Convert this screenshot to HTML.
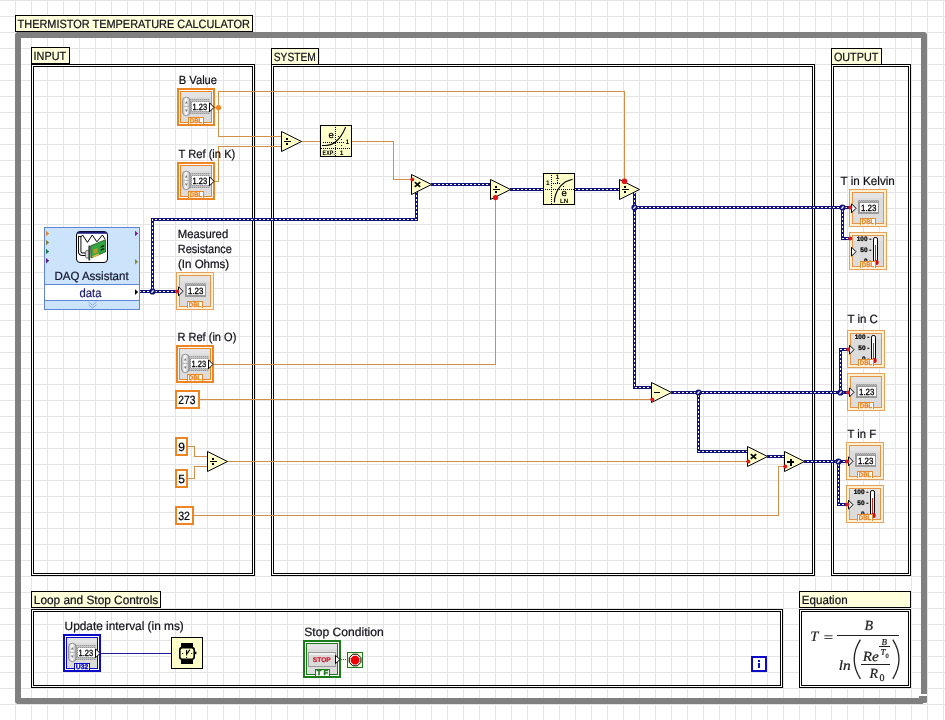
<!DOCTYPE html>
<html lang="en"><head><meta charset="utf-8"><title>Thermistor Temperature Calculator</title>
<style>html,body{margin:0;padding:0;background:#fff;overflow:hidden}svg{display:block;will-change:transform}</style>
</head><body>
<svg width="945" height="720" viewBox="0 0 945 720" shape-rendering="crispEdges" font-family="'Liberation Sans', sans-serif" text-rendering="geometricPrecision">
<defs>
<pattern id="grid" x="0" y="0" width="16" height="16" patternUnits="userSpaceOnUse"><rect x="0" y="0" width="16" height="1" fill="#e4e4e5"/><rect x="15" y="0" width="1" height="16" fill="#e4e4e5"/></pattern>
<linearGradient id="knob" x1="0" x2="1" y1="0" y2="0"><stop offset="0" stop-color="#bcbcbc"/><stop offset="0.45" stop-color="#ffffff"/><stop offset="1" stop-color="#b0b0b0"/></linearGradient>
<pattern id="tex" x="0" y="0" width="2" height="2" patternUnits="userSpaceOnUse"><rect x="0" y="0" width="1" height="1" fill="#bcbcbc"/><rect x="1" y="1" width="1" height="1" fill="#bcbcbc"/></pattern>
</defs>
<rect x="0" y="0" width="945" height="720" fill="#fff"/>
<rect x="0" y="0" width="945" height="720" fill="url(#grid)"/>
<path d="M17 32 H925 L927 34 V702 L925 704 H17 L15 702 V34 Z M21 38 V698 H921 V38 Z" fill="#808080" fill-rule="evenodd" shape-rendering="auto"/>
<rect x="921" y="694" width="6" height="2" fill="#fff"/>
<rect x="919" y="696" width="2" height="2" fill="#808080"/>
<rect x="923" y="703" width="3" height="1" fill="#fff"/>
<rect x="921" y="696" width="6" height="2" fill="#808080"/>
<rect x="15.5" y="15.5" width="237" height="16" fill="#ffffdc" stroke="#000"/>
<text x="17.6" y="28" font-size="12" fill="#101018" textLength="232.2" lengthAdjust="spacingAndGlyphs" stroke="#101018" stroke-width="0.22">THERMISTOR TEMPERATURE CALCULATOR</text>
<rect x="31.5" y="64.5" width="223" height="511" fill="none" stroke="#000"/>
<rect x="32.5" y="65.5" width="221" height="509" fill="none" stroke="#fff"/>
<rect x="33.5" y="66.5" width="219" height="507" fill="none" stroke="#000"/>
<rect x="271.5" y="64.5" width="543" height="511" fill="none" stroke="#000"/>
<rect x="272.5" y="65.5" width="541" height="509" fill="none" stroke="#fff"/>
<rect x="273.5" y="66.5" width="539" height="507" fill="none" stroke="#000"/>
<rect x="831.5" y="64.5" width="79" height="511" fill="none" stroke="#000"/>
<rect x="832.5" y="65.5" width="77" height="509" fill="none" stroke="#fff"/>
<rect x="833.5" y="66.5" width="75" height="507" fill="none" stroke="#000"/>
<rect x="31.5" y="609.5" width="751" height="78" fill="none" stroke="#000"/>
<rect x="32.5" y="610.5" width="749" height="76" fill="none" stroke="#fff"/>
<rect x="33.5" y="611.5" width="747" height="74" fill="none" stroke="#000"/>
<rect x="799" y="609" width="112" height="79" fill="#fff"/>
<rect x="799.5" y="609.5" width="111" height="78" fill="none" stroke="#000"/>
<rect x="800.5" y="610.5" width="109" height="76" fill="none" stroke="#fff"/>
<rect x="801.5" y="611.5" width="107" height="74" fill="none" stroke="#000"/>
<rect x="31.5" y="47.5" width="38" height="16" fill="#ffffdc" stroke="#000"/>
<text x="33.6" y="60" font-size="12" fill="#101018" textLength="32.6" lengthAdjust="spacingAndGlyphs" stroke="#101018" stroke-width="0.22">INPUT</text>
<rect x="271.5" y="48.5" width="47" height="16" fill="#ffffdc" stroke="#000"/>
<text x="273.8" y="61" font-size="12" fill="#101018" textLength="42" lengthAdjust="spacingAndGlyphs" stroke="#101018" stroke-width="0.22">SYSTEM</text>
<rect x="831.5" y="48.5" width="50" height="16" fill="#ffffdc" stroke="#000"/>
<text x="833.9" y="61" font-size="12" fill="#101018" textLength="44.5" lengthAdjust="spacingAndGlyphs" stroke="#101018" stroke-width="0.22">OUTPUT</text>
<rect x="31.5" y="591.5" width="129" height="16" fill="#ffffdc" stroke="#000"/>
<text x="33.8" y="604" font-size="12" fill="#101018" textLength="124.4" lengthAdjust="spacingAndGlyphs" stroke="#101018" stroke-width="0.22">Loop and Stop Controls</text>
<rect x="799.5" y="591.5" width="111" height="16" fill="#ffffdc" stroke="#000"/>
<text x="801.8" y="604" font-size="12" fill="#101018" textLength="45.8" lengthAdjust="spacingAndGlyphs" stroke="#101018" stroke-width="0.22">Equation</text>
<rect x="215" y="107" width="4" height="1" fill="#d18f47"/>
<rect x="218" y="91" width="1" height="46" fill="#d18f47"/>
<rect x="218" y="91" width="407" height="1" fill="#d18f47"/>
<rect x="624" y="91" width="1" height="90" fill="#d18f47"/>
<rect x="218" y="136" width="64" height="1" fill="#d18f47"/>
<rect x="215" y="181" width="4" height="1" fill="#d18f47"/>
<rect x="218" y="146" width="1" height="36" fill="#d18f47"/>
<rect x="218" y="146" width="64" height="1" fill="#d18f47"/>
<rect x="302" y="141" width="19" height="1" fill="#d18f47"/>
<rect x="352" y="141" width="42" height="1" fill="#d18f47"/>
<rect x="393" y="141" width="1" height="39" fill="#d18f47"/>
<rect x="393" y="179" width="19" height="1" fill="#d18f47"/>
<rect x="214" y="364" width="282" height="1" fill="#d18f47"/>
<rect x="495" y="198" width="1" height="167" fill="#d18f47"/>
<rect x="200" y="399" width="452" height="1" fill="#d18f47"/>
<rect x="188" y="446" width="7" height="1" fill="#d18f47"/>
<rect x="194" y="446" width="1" height="11" fill="#d18f47"/>
<rect x="194" y="456" width="14" height="1" fill="#d18f47"/>
<rect x="188" y="478" width="7" height="1" fill="#d18f47"/>
<rect x="194" y="466" width="1" height="13" fill="#d18f47"/>
<rect x="194" y="466" width="14" height="1" fill="#d18f47"/>
<rect x="228" y="461" width="520" height="1" fill="#d18f47"/>
<rect x="194" y="515" width="585" height="1" fill="#d18f47"/>
<rect x="778" y="466" width="1" height="50" fill="#d18f47"/>
<rect x="778" y="466" width="7" height="1" fill="#d18f47"/>
<circle cx="218.5" cy="107.5" r="2.6" fill="#ee8522" shape-rendering="auto"/>
<path d="M140.0 291.5 L177.0 291.5" fill="none" stroke="#12127c" stroke-width="3" stroke-linejoin="miter" stroke-linecap="butt"/>
<path d="M140.0 291.5 L177.0 291.5" fill="none" stroke="#fff" stroke-width="1" stroke-dasharray="2 2" stroke-dashoffset="1"/>
<path d="M152.5 292.0 L152.5 219.5 L416.5 219.5 L416.5 192.0" fill="none" stroke="#12127c" stroke-width="3" stroke-linejoin="miter" stroke-linecap="butt"/>
<path d="M152.5 292.0 L152.5 219.5 L416.5 219.5 L416.5 192.0" fill="none" stroke="#fff" stroke-width="1" stroke-dasharray="2 2" stroke-dashoffset="1"/>
<path d="M431.0 184.5 L491.0 184.5" fill="none" stroke="#12127c" stroke-width="3" stroke-linejoin="miter" stroke-linecap="butt"/>
<path d="M431.0 184.5 L491.0 184.5" fill="none" stroke="#fff" stroke-width="1" stroke-dasharray="2 2" stroke-dashoffset="1"/>
<path d="M510.0 189.5 L544.0 189.5" fill="none" stroke="#12127c" stroke-width="3" stroke-linejoin="miter" stroke-linecap="butt"/>
<path d="M510.0 189.5 L544.0 189.5" fill="none" stroke="#fff" stroke-width="1" stroke-dasharray="2 2" stroke-dashoffset="1"/>
<path d="M575.0 189.5 L620.0 189.5" fill="none" stroke="#12127c" stroke-width="3" stroke-linejoin="miter" stroke-linecap="butt"/>
<path d="M575.0 189.5 L620.0 189.5" fill="none" stroke="#fff" stroke-width="1" stroke-dasharray="2 2" stroke-dashoffset="1"/>
<path d="M634.5 193.0 L634.5 387.5 L652.0 387.5" fill="none" stroke="#12127c" stroke-width="3" stroke-linejoin="miter" stroke-linecap="butt"/>
<path d="M634.5 193.0 L634.5 387.5 L652.0 387.5" fill="none" stroke="#fff" stroke-width="1" stroke-dasharray="2 2" stroke-dashoffset="1"/>
<path d="M634.0 207.5 L850.0 207.5" fill="none" stroke="#12127c" stroke-width="3" stroke-linejoin="miter" stroke-linecap="butt"/>
<path d="M634.0 207.5 L850.0 207.5" fill="none" stroke="#fff" stroke-width="1" stroke-dasharray="2 2" stroke-dashoffset="1"/>
<path d="M842.5 207.0 L842.5 238.5 L850.0 238.5" fill="none" stroke="#12127c" stroke-width="3" stroke-linejoin="miter" stroke-linecap="butt"/>
<path d="M842.5 207.0 L842.5 238.5 L850.0 238.5" fill="none" stroke="#fff" stroke-width="1" stroke-dasharray="2 2" stroke-dashoffset="1"/>
<path d="M671.0 392.5 L848.0 392.5" fill="none" stroke="#12127c" stroke-width="3" stroke-linejoin="miter" stroke-linecap="butt"/>
<path d="M671.0 392.5 L848.0 392.5" fill="none" stroke="#fff" stroke-width="1" stroke-dasharray="2 2" stroke-dashoffset="1"/>
<path d="M840.5 393.0 L840.5 349.5 L848.0 349.5" fill="none" stroke="#12127c" stroke-width="3" stroke-linejoin="miter" stroke-linecap="butt"/>
<path d="M840.5 393.0 L840.5 349.5 L848.0 349.5" fill="none" stroke="#fff" stroke-width="1" stroke-dasharray="2 2" stroke-dashoffset="1"/>
<path d="M698.5 392.0 L698.5 451.5 L748.0 451.5" fill="none" stroke="#12127c" stroke-width="3" stroke-linejoin="miter" stroke-linecap="butt"/>
<path d="M698.5 392.0 L698.5 451.5 L748.0 451.5" fill="none" stroke="#fff" stroke-width="1" stroke-dasharray="2 2" stroke-dashoffset="1"/>
<path d="M767.0 456.5 L785.0 456.5" fill="none" stroke="#12127c" stroke-width="3" stroke-linejoin="miter" stroke-linecap="butt"/>
<path d="M767.0 456.5 L785.0 456.5" fill="none" stroke="#fff" stroke-width="1" stroke-dasharray="2 2" stroke-dashoffset="1"/>
<path d="M804.0 461.5 L847.0 461.5" fill="none" stroke="#12127c" stroke-width="3" stroke-linejoin="miter" stroke-linecap="butt"/>
<path d="M804.0 461.5 L847.0 461.5" fill="none" stroke="#fff" stroke-width="1" stroke-dasharray="2 2" stroke-dashoffset="1"/>
<path d="M838.5 461.0 L838.5 504.5 L847.0 504.5" fill="none" stroke="#12127c" stroke-width="3" stroke-linejoin="miter" stroke-linecap="butt"/>
<path d="M838.5 461.0 L838.5 504.5 L847.0 504.5" fill="none" stroke="#fff" stroke-width="1" stroke-dasharray="2 2" stroke-dashoffset="1"/>
<circle cx="152.5" cy="291.5" r="3.1" fill="#12127c" shape-rendering="auto"/>
<path d="M151.8 292.2 L153.2 290.8" stroke="#fff" stroke-width="1.3" stroke-linecap="round" shape-rendering="auto"/>
<circle cx="634.5" cy="207.5" r="3.1" fill="#12127c" shape-rendering="auto"/>
<path d="M633.8 208.2 L635.2 206.8" stroke="#fff" stroke-width="1.3" stroke-linecap="round" shape-rendering="auto"/>
<circle cx="842.5" cy="207.5" r="3.1" fill="#12127c" shape-rendering="auto"/>
<path d="M841.8 208.2 L843.2 206.8" stroke="#fff" stroke-width="1.3" stroke-linecap="round" shape-rendering="auto"/>
<circle cx="698.5" cy="392.5" r="3.1" fill="#12127c" shape-rendering="auto"/>
<path d="M697.8 393.2 L699.2 391.8" stroke="#fff" stroke-width="1.3" stroke-linecap="round" shape-rendering="auto"/>
<circle cx="840.5" cy="392.5" r="3.1" fill="#12127c" shape-rendering="auto"/>
<path d="M839.8 393.2 L841.2 391.8" stroke="#fff" stroke-width="1.3" stroke-linecap="round" shape-rendering="auto"/>
<circle cx="838.5" cy="461.5" r="3.1" fill="#12127c" shape-rendering="auto"/>
<path d="M837.8 462.2 L839.2 460.8" stroke="#fff" stroke-width="1.3" stroke-linecap="round" shape-rendering="auto"/>
<text x="178.8" y="84" font-size="12" fill="#101018" textLength="38.2" lengthAdjust="spacingAndGlyphs" stroke="#101018" stroke-width="0.22">B Value</text>
<rect x="177" y="88" width="38" height="38" fill="#ee8522"/>
<rect x="179" y="90" width="34" height="34" fill="#fff"/>
<rect x="180" y="91" width="32" height="32" fill="#ee8522"/>
<rect x="181" y="92" width="30" height="30" fill="#dcdcdc"/>
<rect x="181" y="92" width="30" height="5" fill="#e4e4e4"/>
<rect x="189" y="99" width="21" height="15" fill="#989898"/>
<rect x="189" y="99" width="21" height="15" fill="url(#tex)"/>
<rect x="189" y="100" width="21" height="1" fill="#c8c8c8"/>
<rect x="189" y="112" width="21" height="1" fill="#c0c0c0"/>
<rect x="182.6" y="97.2" width="7.4" height="18.4" rx="3.6" fill="url(#knob)" stroke="#8a8a8a" stroke-width="0.9" shape-rendering="auto"/>
<path d="M184.9 103.4 l1.4 -2.4 l1.4 2.4z M184.9 109.6 l1.4 2.4 l1.4 -2.4z" fill="#7c7c7c" shape-rendering="auto"/>
<path d="M183.6 106.4 h5.4" stroke="#a8a8a8" stroke-width="0.8" shape-rendering="auto"/>
<rect x="192" y="102" width="18" height="9" fill="#fff"/>
<text x="192.6" y="109.6" font-size="9" fill="#000" textLength="14.6" lengthAdjust="spacingAndGlyphs" stroke="#000" stroke-width="0.3">1.23</text>
<path d="M209.5 102.8 L214 107.3 L209.5 111.8z" fill="#fff" stroke="#000" shape-rendering="auto"/>
<rect x="188" y="117" width="16" height="7" fill="#ee8522"/>
<rect x="189" y="118" width="14" height="6" fill="#fff"/>
<text x="196.0" y="123.3" font-size="6.8" fill="#ee8522" textLength="12.4" lengthAdjust="spacingAndGlyphs" font-weight="bold" text-anchor="middle" stroke="#ee8522" stroke-width="0.38">DBL</text>
<text x="178.5" y="158" font-size="12" fill="#101018" textLength="56.8" lengthAdjust="spacingAndGlyphs" stroke="#101018" stroke-width="0.22">T Ref (in K)</text>
<rect x="177" y="162" width="38" height="38" fill="#ee8522"/>
<rect x="179" y="164" width="34" height="34" fill="#fff"/>
<rect x="180" y="165" width="32" height="32" fill="#ee8522"/>
<rect x="181" y="166" width="30" height="30" fill="#dcdcdc"/>
<rect x="181" y="166" width="30" height="5" fill="#e4e4e4"/>
<rect x="189" y="173" width="21" height="15" fill="#989898"/>
<rect x="189" y="173" width="21" height="15" fill="url(#tex)"/>
<rect x="189" y="174" width="21" height="1" fill="#c8c8c8"/>
<rect x="189" y="186" width="21" height="1" fill="#c0c0c0"/>
<rect x="182.6" y="171.2" width="7.4" height="18.4" rx="3.6" fill="url(#knob)" stroke="#8a8a8a" stroke-width="0.9" shape-rendering="auto"/>
<path d="M184.9 177.4 l1.4 -2.4 l1.4 2.4z M184.9 183.6 l1.4 2.4 l1.4 -2.4z" fill="#7c7c7c" shape-rendering="auto"/>
<path d="M183.6 180.4 h5.4" stroke="#a8a8a8" stroke-width="0.8" shape-rendering="auto"/>
<rect x="192" y="176" width="18" height="9" fill="#fff"/>
<text x="192.6" y="183.6" font-size="9" fill="#000" textLength="14.6" lengthAdjust="spacingAndGlyphs" stroke="#000" stroke-width="0.3">1.23</text>
<path d="M209.5 176.8 L214 181.3 L209.5 185.8z" fill="#fff" stroke="#000" shape-rendering="auto"/>
<rect x="188" y="191" width="16" height="7" fill="#ee8522"/>
<rect x="189" y="192" width="14" height="6" fill="#fff"/>
<text x="196.0" y="197.3" font-size="6.8" fill="#ee8522" textLength="12.4" lengthAdjust="spacingAndGlyphs" font-weight="bold" text-anchor="middle" stroke="#ee8522" stroke-width="0.38">DBL</text>
<text x="177.8" y="238.3" font-size="12" fill="#101018" textLength="50.4" lengthAdjust="spacingAndGlyphs" stroke="#101018" stroke-width="0.22">Measured</text>
<text x="177.8" y="253.2" font-size="12" fill="#101018" textLength="54.0" lengthAdjust="spacingAndGlyphs" stroke="#101018" stroke-width="0.22">Resistance</text>
<text x="178.0" y="268.2" font-size="12" fill="#101018" textLength="51.2" lengthAdjust="spacingAndGlyphs" stroke="#101018" stroke-width="0.22">(In Ohms)</text>
<rect x="176" y="272" width="38" height="38" fill="#e6a05a"/>
<rect x="177" y="273" width="36" height="36" fill="#fff1d2"/>
<rect x="179" y="275" width="32" height="32" fill="#e8954a"/>
<rect x="180" y="276" width="30" height="30" fill="#dcdcdc"/>
<rect x="180" y="276" width="30" height="5" fill="#e4e4e4"/>
<rect x="185" y="283" width="21" height="14" fill="#9a9a9a"/>
<rect x="185" y="283" width="21" height="2" fill="url(#tex)"/>
<rect x="187" y="286" width="18" height="9" fill="#fff"/>
<text x="188" y="293.6" font-size="9" fill="#000" textLength="15.4" lengthAdjust="spacingAndGlyphs" stroke="#000" stroke-width="0.3">1.23</text>
<path d="M178.5 286.8 L183 291.3 L178.5 295.8z" fill="#fff" stroke="#000" shape-rendering="auto"/>
<rect x="187" y="301" width="16" height="7" fill="#e58a2c"/>
<rect x="188" y="302" width="14" height="6" fill="#fff"/>
<text x="195.0" y="307.3" font-size="6.8" fill="#e58a2c" textLength="12.4" lengthAdjust="spacingAndGlyphs" font-weight="bold" text-anchor="middle" stroke="#e58a2c" stroke-width="0.38">DBL</text>
<text x="177.4" y="340.6" font-size="12" fill="#101018" textLength="59" lengthAdjust="spacingAndGlyphs" stroke="#101018" stroke-width="0.22">R Ref (in O)</text>
<rect x="176" y="345" width="38" height="38" fill="#ee8522"/>
<rect x="178" y="347" width="34" height="34" fill="#fff"/>
<rect x="179" y="348" width="32" height="32" fill="#ee8522"/>
<rect x="180" y="349" width="30" height="30" fill="#dcdcdc"/>
<rect x="180" y="349" width="30" height="5" fill="#e4e4e4"/>
<rect x="188" y="356" width="21" height="15" fill="#989898"/>
<rect x="188" y="356" width="21" height="15" fill="url(#tex)"/>
<rect x="188" y="357" width="21" height="1" fill="#c8c8c8"/>
<rect x="188" y="369" width="21" height="1" fill="#c0c0c0"/>
<rect x="181.6" y="354.2" width="7.4" height="18.4" rx="3.6" fill="url(#knob)" stroke="#8a8a8a" stroke-width="0.9" shape-rendering="auto"/>
<path d="M183.9 360.4 l1.4 -2.4 l1.4 2.4z M183.9 366.6 l1.4 2.4 l1.4 -2.4z" fill="#7c7c7c" shape-rendering="auto"/>
<path d="M182.6 363.4 h5.4" stroke="#a8a8a8" stroke-width="0.8" shape-rendering="auto"/>
<rect x="191" y="359" width="18" height="9" fill="#fff"/>
<text x="191.6" y="366.6" font-size="9" fill="#000" textLength="14.6" lengthAdjust="spacingAndGlyphs" stroke="#000" stroke-width="0.3">1.23</text>
<path d="M208.5 359.8 L213 364.3 L208.5 368.8z" fill="#fff" stroke="#000" shape-rendering="auto"/>
<rect x="187" y="374" width="16" height="7" fill="#ee8522"/>
<rect x="188" y="375" width="14" height="6" fill="#fff"/>
<text x="195.0" y="380.3" font-size="6.8" fill="#ee8522" textLength="12.4" lengthAdjust="spacingAndGlyphs" font-weight="bold" text-anchor="middle" stroke="#ee8522" stroke-width="0.38">DBL</text>
<rect x="175" y="390" width="25" height="19" fill="#ee8522"/>
<rect x="177" y="392" width="21" height="15" fill="#fff"/>
<text x="178.3" y="403.5" font-size="12" fill="#000" textLength="17.2" lengthAdjust="spacingAndGlyphs" stroke="#000" stroke-width="0.22">273</text>
<rect x="175" y="437" width="13" height="19" fill="#ee8522"/>
<rect x="177" y="439" width="9" height="15" fill="#fff"/>
<text x="178.2" y="450.5" font-size="12" fill="#000" stroke="#000" stroke-width="0.22">9</text>
<rect x="175" y="469" width="13" height="19" fill="#ee8522"/>
<rect x="177" y="471" width="9" height="15" fill="#fff"/>
<text x="178.2" y="482.5" font-size="12" fill="#000" stroke="#000" stroke-width="0.22">5</text>
<rect x="175" y="506" width="19" height="19" fill="#ee8522"/>
<rect x="177" y="508" width="15" height="15" fill="#fff"/>
<text x="178.2" y="519.5" font-size="12" fill="#000" textLength="11.8" lengthAdjust="spacingAndGlyphs" stroke="#000" stroke-width="0.22">32</text>
<path d="M207.5 451.5 L207.5 471.5 L227.5 461.5z" fill="#ffffca" stroke="#000" stroke-linejoin="miter" shape-rendering="auto"/>
<rect x="210" y="461" width="7" height="1" fill="#000"/>
<rect x="212" y="458" width="2" height="2" fill="#000"/>
<rect x="212" y="463" width="2" height="2" fill="#000"/>
<rect x="44" y="227" width="96" height="83" fill="#5f84d8"/>
<rect x="45" y="228" width="94" height="81" fill="#cbe4fc"/>
<rect x="45" y="285" width="94" height="15" fill="#fff"/>
<rect x="45" y="284" width="94" height="1" fill="#5f84d8"/>
<rect x="45" y="300" width="94" height="1" fill="#5f84d8"/>
<text x="54.4" y="280" font-size="12" fill="#14142a" textLength="74.2" lengthAdjust="spacingAndGlyphs" stroke="#14142a" stroke-width="0.22">DAQ Assistant</text>
<text x="79.6" y="296.8" font-size="12" fill="#1a1a70" textLength="21.8" lengthAdjust="spacingAndGlyphs" stroke="#1a1a70" stroke-width="0.22">data</text>
<path d="M88.5 302 l4 3.2 l4 -3.2 M88.5 304.8 l4 3.2 l4 -3.2" fill="none" stroke="#8aa6de" stroke-width="1" shape-rendering="auto"/>
<path d="M46 230.7 l3.2 2.8 l-3.2 2.8z" fill="#dc8a30" shape-rendering="auto"/>
<path d="M46 239.7 l3.2 2.8 l-3.2 2.8z" fill="#848430" shape-rendering="auto"/>
<path d="M46 248.7 l3.2 2.8 l-3.2 2.8z" fill="#1e8040" shape-rendering="auto"/>
<path d="M46 258.0 l3.2 2.8 l-3.2 2.8z" fill="#601c88" shape-rendering="auto"/>
<path d="M135 230.7 l3.2 2.8 l-3.2 2.8z" fill="#80208a" shape-rendering="auto"/>
<path d="M135 259.0 l3.2 2.8 l-3.2 2.8z" fill="#8c8c40" shape-rendering="auto"/>
<path d="M135 289.3 l3.2 2.8 l-3.2 2.8z" fill="#000" shape-rendering="auto"/>
<g shape-rendering="auto">
<rect x="76.5" y="231.5" width="31" height="31" rx="3.5" fill="#fff" stroke="#000"/>
<path d="M79.2 231.4 h25.6 a3.2 3.2 0 0 1 2.6 2.4 h-30.8 a3.2 3.2 0 0 1 2.6 -2.4z" fill="#1c1c78"/>
<path d="M78.3 236.4 H81.6 L82.6 235 L87.4 242.4 L92.3 235 L96.9 241.8 L102.4 235 L105.2 239.2" fill="none" stroke="#000" stroke-width="1"/>
<path d="M79.7 236.4 V251.6 Q79.7 254.2 82.6 254.2 H86" fill="none" stroke="#000" stroke-width="3.4"/>
<path d="M79.7 237 V251.6 Q79.7 254.2 82.6 254.2 H86" fill="none" stroke="#fff" stroke-width="1.5"/>
<path d="M90.6 245.8 L105.5 239.7 L105.5 251.9 L91 258z" fill="#34a440" stroke="#1d5a22" stroke-width="0.8"/>
<path d="M93.2 249.6 L97.5 247.9 L97.6 252.6 L93.3 254.3z" fill="#b89a28"/>
<path d="M100.6 246.2 l3.6 -1.5 l0 1.8 l-3.6 1.5z M100.6 249.2 l3.6 -1.5 l0 1.8 l-3.6 1.5z" fill="#16301a"/>
<path d="M92.4 256.0 l6.4 -2.7 l0.1 1.9 l-6.4 2.7z" fill="#d8b838"/>
<path d="M85.4 252 q0 -1.6 2.6 -1.8 h1.2 v8 h-1.2 q-2.6 -0.2 -2.6 -1.8z" fill="#d8d8d8" stroke="#444" stroke-width="0.7"/>
<path d="M89.3 245.6 V260.4" stroke="#3c3c3c" stroke-width="1.8"/>
</g>
<path d="M281.5 131.5 L281.5 151.5 L301.5 141.5z" fill="#ffffca" stroke="#000" stroke-linejoin="miter" shape-rendering="auto"/>
<rect x="284" y="141" width="7" height="1" fill="#000"/>
<rect x="286" y="138" width="2" height="2" fill="#000"/>
<rect x="286" y="143" width="2" height="2" fill="#000"/>
<path d="M411.5 174.5 L411.5 194.5 L431.5 184.5z" fill="#ffffca" stroke="#000" stroke-linejoin="miter" shape-rendering="auto"/>
<path d="M414.8 182.2 L420.2 186.8 M420.2 182.2 L414.8 186.8" stroke="#000" stroke-width="1.7" shape-rendering="auto"/>
<path d="M490.5 179.5 L490.5 199.5 L510.5 189.5z" fill="#ffffca" stroke="#000" stroke-linejoin="miter" shape-rendering="auto"/>
<rect x="493" y="189" width="7" height="1" fill="#000"/>
<rect x="495" y="186" width="2" height="2" fill="#000"/>
<rect x="495" y="191" width="2" height="2" fill="#000"/>
<path d="M619.5 179.5 L619.5 199.5 L639.5 189.5z" fill="#ffffca" stroke="#000" stroke-linejoin="miter" shape-rendering="auto"/>
<rect x="622" y="189" width="7" height="1" fill="#000"/>
<rect x="624" y="186" width="2" height="2" fill="#000"/>
<rect x="624" y="191" width="2" height="2" fill="#000"/>
<path d="M651.5 382.5 L651.5 402.5 L671.5 392.5z" fill="#ffffca" stroke="#000" stroke-linejoin="miter" shape-rendering="auto"/>
<rect x="654" y="392" width="6" height="1" fill="#000"/>
<path d="M747.5 446.5 L747.5 466.5 L767.5 456.5z" fill="#ffffca" stroke="#000" stroke-linejoin="miter" shape-rendering="auto"/>
<path d="M750.8 454.2 L756.2 458.8 M756.2 454.2 L750.8 458.8" stroke="#000" stroke-width="1.7" shape-rendering="auto"/>
<path d="M784.5 451.5 L784.5 471.5 L804.5 461.5z" fill="#ffffca" stroke="#000" stroke-linejoin="miter" shape-rendering="auto"/>
<rect x="787" y="461" width="7" height="2" fill="#000"/>
<rect x="789.5" y="458.5" width="2" height="7" fill="#000"/>
<circle cx="412.3" cy="179.5" r="2.0" fill="#e01818" shape-rendering="auto"/>
<circle cx="495.5" cy="197.6" r="2.7" fill="#e01818" shape-rendering="auto"/>
<circle cx="624.5" cy="181.3" r="2.8" fill="#e01818" shape-rendering="auto"/>
<circle cx="652.3" cy="399.5" r="2.0" fill="#e01818" shape-rendering="auto"/>
<circle cx="748.3" cy="461.5" r="2.0" fill="#e01818" shape-rendering="auto"/>
<circle cx="785.3" cy="466.5" r="2.0" fill="#e01818" shape-rendering="auto"/>
<rect x="320.5" y="125.5" width="31" height="31" fill="#ffffca" stroke="#000"/>
<rect x="335" y="127" width="1" height="1" fill="#000"/>
<rect x="335" y="129" width="1" height="1" fill="#000"/>
<rect x="335" y="131" width="1" height="1" fill="#000"/>
<rect x="335" y="133" width="1" height="1" fill="#000"/>
<rect x="335" y="135" width="1" height="1" fill="#000"/>
<rect x="335" y="137" width="1" height="1" fill="#000"/>
<rect x="335" y="139" width="1" height="1" fill="#000"/>
<rect x="335" y="141" width="1" height="1" fill="#000"/>
<rect x="335" y="143" width="1" height="1" fill="#000"/>
<rect x="335" y="145" width="1" height="1" fill="#000"/>
<rect x="335" y="147" width="1" height="1" fill="#000"/>
<rect x="335" y="149" width="1" height="1" fill="#000"/>
<rect x="335" y="151" width="1" height="1" fill="#000"/>
<rect x="335" y="153" width="1" height="1" fill="#000"/>
<rect x="335" y="155" width="1" height="1" fill="#000"/>
<rect x="323" y="142" width="1" height="1" fill="#000"/>
<rect x="325" y="142" width="1" height="1" fill="#000"/>
<rect x="327" y="142" width="1" height="1" fill="#000"/>
<rect x="329" y="142" width="1" height="1" fill="#000"/>
<rect x="331" y="142" width="1" height="1" fill="#000"/>
<rect x="333" y="142" width="1" height="1" fill="#000"/>
<rect x="335" y="142" width="1" height="1" fill="#000"/>
<rect x="337" y="142" width="1" height="1" fill="#000"/>
<rect x="339" y="142" width="1" height="1" fill="#000"/>
<rect x="341" y="142" width="1" height="1" fill="#000"/>
<rect x="343" y="142" width="1" height="1" fill="#000"/>
<rect x="321" y="148" width="1" height="1" fill="#000"/>
<rect x="323" y="148" width="1" height="1" fill="#000"/>
<rect x="325" y="148" width="1" height="1" fill="#000"/>
<rect x="327" y="148" width="1" height="1" fill="#000"/>
<rect x="329" y="148" width="1" height="1" fill="#000"/>
<rect x="331" y="148" width="1" height="1" fill="#000"/>
<rect x="333" y="148" width="1" height="1" fill="#000"/>
<rect x="335" y="148" width="1" height="1" fill="#000"/>
<rect x="337" y="148" width="1" height="1" fill="#000"/>
<rect x="339" y="148" width="1" height="1" fill="#000"/>
<rect x="341" y="148" width="1" height="1" fill="#000"/>
<rect x="343" y="148" width="1" height="1" fill="#000"/>
<rect x="345" y="148" width="1" height="1" fill="#000"/>
<rect x="347" y="148" width="1" height="1" fill="#000"/>
<rect x="349" y="148" width="1" height="1" fill="#000"/>
<rect x="338" y="136" width="1" height="1" fill="#000"/>
<rect x="341" y="139" width="1" height="1" fill="#000"/>
<rect x="341" y="145" width="1" height="1" fill="#000"/>
<path d="M322 145.5 h3.5 q6.5 -0.4 10.5 -4 q6 -5.2 9.6 -14.4" fill="none" stroke="#000" stroke-width="1.15" shape-rendering="auto"/>
<text x="328.6" y="138.4" font-size="9.5" fill="#000" stroke="#000" stroke-width="0.2">e</text>
<text x="345.6" y="144.2" font-size="6.5" fill="#000" font-weight="bold">1</text>
<text x="322.6" y="154.8" font-size="6.6" fill="#000" textLength="12.4" lengthAdjust="spacingAndGlyphs" font-weight="bold">EXP:</text>
<text x="339.8" y="154.8" font-size="6.6" fill="#000" font-weight="bold">1</text>
<rect x="543.5" y="173.5" width="31" height="31" fill="#ffffca" stroke="#000"/>
<rect x="551" y="175" width="1" height="1" fill="#000"/>
<rect x="551" y="177" width="1" height="1" fill="#000"/>
<rect x="551" y="179" width="1" height="1" fill="#000"/>
<rect x="551" y="181" width="1" height="1" fill="#000"/>
<rect x="551" y="183" width="1" height="1" fill="#000"/>
<rect x="551" y="185" width="1" height="1" fill="#000"/>
<rect x="551" y="187" width="1" height="1" fill="#000"/>
<rect x="551" y="189" width="1" height="1" fill="#000"/>
<rect x="551" y="191" width="1" height="1" fill="#000"/>
<rect x="551" y="193" width="1" height="1" fill="#000"/>
<rect x="551" y="195" width="1" height="1" fill="#000"/>
<rect x="551" y="197" width="1" height="1" fill="#000"/>
<rect x="551" y="199" width="1" height="1" fill="#000"/>
<rect x="551" y="201" width="1" height="1" fill="#000"/>
<rect x="551" y="203" width="1" height="1" fill="#000"/>
<rect x="545" y="189" width="1" height="1" fill="#000"/>
<rect x="547" y="189" width="1" height="1" fill="#000"/>
<rect x="549" y="189" width="1" height="1" fill="#000"/>
<rect x="551" y="189" width="1" height="1" fill="#000"/>
<rect x="553" y="189" width="1" height="1" fill="#000"/>
<rect x="555" y="189" width="1" height="1" fill="#000"/>
<rect x="557" y="189" width="1" height="1" fill="#000"/>
<rect x="559" y="189" width="1" height="1" fill="#000"/>
<rect x="561" y="189" width="1" height="1" fill="#000"/>
<rect x="563" y="189" width="1" height="1" fill="#000"/>
<rect x="565" y="189" width="1" height="1" fill="#000"/>
<rect x="567" y="189" width="1" height="1" fill="#000"/>
<rect x="569" y="189" width="1" height="1" fill="#000"/>
<rect x="571" y="189" width="1" height="1" fill="#000"/>
<rect x="573" y="189" width="1" height="1" fill="#000"/>
<rect x="553" y="183" width="1" height="1" fill="#000"/>
<rect x="555" y="183" width="1" height="1" fill="#000"/>
<rect x="557" y="183" width="1" height="1" fill="#000"/>
<rect x="559" y="183" width="1" height="1" fill="#000"/>
<rect x="557" y="180" width="1" height="1" fill="#000"/>
<rect x="557" y="182" width="1" height="1" fill="#000"/>
<rect x="563" y="186" width="1" height="1" fill="#000"/>
<path d="M554.5 202.6 V199.4 Q555.2 194.8 557.6 190 Q560.6 185 565.6 181.8 Q568.6 180.2 572.6 179.2" fill="none" stroke="#000" stroke-width="1.15" shape-rendering="auto"/>
<text x="546.0" y="184.6" font-size="6.5" fill="#000" font-weight="bold">1</text>
<text x="555.8" y="178.6" font-size="6.5" fill="#000" font-weight="bold">1</text>
<text x="561.4" y="195.8" font-size="9.5" fill="#000" stroke="#000" stroke-width="0.2">e</text>
<text x="560.0" y="202.6" font-size="6.2" fill="#000" textLength="8.2" lengthAdjust="spacingAndGlyphs" font-weight="bold">LN</text>
<text x="840.6" y="184.8" font-size="12" fill="#101018" textLength="54.2" lengthAdjust="spacingAndGlyphs" stroke="#101018" stroke-width="0.22">T in Kelvin</text>
<rect x="849" y="189" width="38" height="38" fill="#e6a05a"/>
<rect x="850" y="190" width="36" height="36" fill="#fff1d2"/>
<rect x="852" y="192" width="32" height="32" fill="#e8954a"/>
<rect x="853" y="193" width="30" height="30" fill="#dcdcdc"/>
<rect x="853" y="193" width="30" height="5" fill="#e4e4e4"/>
<rect x="858" y="200" width="21" height="14" fill="#9a9a9a"/>
<rect x="858" y="200" width="21" height="2" fill="url(#tex)"/>
<rect x="860" y="203" width="18" height="9" fill="#fff"/>
<text x="861" y="210.6" font-size="9" fill="#000" textLength="15.4" lengthAdjust="spacingAndGlyphs" stroke="#000" stroke-width="0.3">1.23</text>
<path d="M851.5 203.8 L856 208.3 L851.5 212.8z" fill="#fff" stroke="#000" shape-rendering="auto"/>
<rect x="860" y="218" width="16" height="7" fill="#e58a2c"/>
<rect x="861" y="219" width="14" height="6" fill="#fff"/>
<text x="868.0" y="224.3" font-size="6.8" fill="#e58a2c" textLength="12.4" lengthAdjust="spacingAndGlyphs" font-weight="bold" text-anchor="middle" stroke="#e58a2c" stroke-width="0.38">DBL</text>
<rect x="849" y="232" width="38" height="38" fill="#e6a05a"/>
<rect x="850" y="233" width="36" height="36" fill="#fff1d2"/>
<rect x="852" y="235" width="32" height="32" fill="#e8954a"/>
<rect x="853" y="236" width="30" height="30" fill="#dcdcdc"/>
<rect x="853" y="236" width="30" height="5" fill="#e4e4e4"/>
<text x="871.5" y="241.3" font-size="6.5" fill="#000" font-weight="bold" text-anchor="end" stroke="#000" stroke-width="0.22">100 -</text>
<text x="871.5" y="252.3" font-size="6.5" fill="#000" font-weight="bold" text-anchor="end" stroke="#000" stroke-width="0.22">50 -</text>
<text x="871.5" y="263.0" font-size="6.5" fill="#000" font-weight="bold" text-anchor="end" stroke="#000" stroke-width="0.22">0 -</text>
<rect x="873.5" y="237.5" width="4" height="26" rx="1.6" fill="#fff" stroke="#000" shape-rendering="auto"/>
<rect x="875" y="245" width="1" height="18" fill="#d02020"/>
<circle cx="876.2" cy="262.6" r="2.5" fill="#d01010" shape-rendering="auto"/>
<path d="M851.5 247.2 L856 251.7 L851.5 256.2z" fill="#fff" stroke="#000" shape-rendering="auto"/>
<rect x="860" y="261" width="16" height="7" fill="#e58a2c"/>
<rect x="861" y="262" width="14" height="6" fill="#fff"/>
<text x="868.0" y="267.3" font-size="6.8" fill="#e58a2c" textLength="12.4" lengthAdjust="spacingAndGlyphs" font-weight="bold" text-anchor="middle" stroke="#e58a2c" stroke-width="0.38">DBL</text>
<text x="847.5" y="323" font-size="12" fill="#101018" textLength="30.4" lengthAdjust="spacingAndGlyphs" stroke="#101018" stroke-width="0.22">T in C</text>
<rect x="847" y="330" width="38" height="38" fill="#e6a05a"/>
<rect x="848" y="331" width="36" height="36" fill="#fff1d2"/>
<rect x="850" y="333" width="32" height="32" fill="#e8954a"/>
<rect x="851" y="334" width="30" height="30" fill="#dcdcdc"/>
<rect x="851" y="334" width="30" height="5" fill="#e4e4e4"/>
<text x="869.5" y="339.3" font-size="6.5" fill="#000" font-weight="bold" text-anchor="end" stroke="#000" stroke-width="0.22">100 -</text>
<text x="869.5" y="350.3" font-size="6.5" fill="#000" font-weight="bold" text-anchor="end" stroke="#000" stroke-width="0.22">50 -</text>
<text x="869.5" y="361.0" font-size="6.5" fill="#000" font-weight="bold" text-anchor="end" stroke="#000" stroke-width="0.22">0 -</text>
<rect x="871.5" y="335.5" width="4" height="26" rx="1.6" fill="#fff" stroke="#000" shape-rendering="auto"/>
<rect x="873" y="343" width="1" height="18" fill="#d02020"/>
<circle cx="874.2" cy="360.6" r="2.5" fill="#d01010" shape-rendering="auto"/>
<path d="M849.5 345.2 L854 349.7 L849.5 354.2z" fill="#fff" stroke="#000" shape-rendering="auto"/>
<rect x="858" y="359" width="16" height="7" fill="#e58a2c"/>
<rect x="859" y="360" width="14" height="6" fill="#fff"/>
<text x="866.0" y="365.3" font-size="6.8" fill="#e58a2c" textLength="12.4" lengthAdjust="spacingAndGlyphs" font-weight="bold" text-anchor="middle" stroke="#e58a2c" stroke-width="0.38">DBL</text>
<rect x="847" y="373" width="38" height="38" fill="#e6a05a"/>
<rect x="848" y="374" width="36" height="36" fill="#fff1d2"/>
<rect x="850" y="376" width="32" height="32" fill="#e8954a"/>
<rect x="851" y="377" width="30" height="30" fill="#dcdcdc"/>
<rect x="851" y="377" width="30" height="5" fill="#e4e4e4"/>
<rect x="856" y="384" width="21" height="14" fill="#9a9a9a"/>
<rect x="856" y="384" width="21" height="2" fill="url(#tex)"/>
<rect x="858" y="387" width="18" height="9" fill="#fff"/>
<text x="859" y="394.6" font-size="9" fill="#000" textLength="15.4" lengthAdjust="spacingAndGlyphs" stroke="#000" stroke-width="0.3">1.23</text>
<path d="M849.5 387.8 L854 392.3 L849.5 396.8z" fill="#fff" stroke="#000" shape-rendering="auto"/>
<rect x="858" y="402" width="16" height="7" fill="#e58a2c"/>
<rect x="859" y="403" width="14" height="6" fill="#fff"/>
<text x="866.0" y="408.3" font-size="6.8" fill="#e58a2c" textLength="12.4" lengthAdjust="spacingAndGlyphs" font-weight="bold" text-anchor="middle" stroke="#e58a2c" stroke-width="0.38">DBL</text>
<text x="847.5" y="438" font-size="12" fill="#101018" textLength="28.5" lengthAdjust="spacingAndGlyphs" stroke="#101018" stroke-width="0.22">T in F</text>
<rect x="846" y="442" width="38" height="38" fill="#e6a05a"/>
<rect x="847" y="443" width="36" height="36" fill="#fff1d2"/>
<rect x="849" y="445" width="32" height="32" fill="#e8954a"/>
<rect x="850" y="446" width="30" height="30" fill="#dcdcdc"/>
<rect x="850" y="446" width="30" height="5" fill="#e4e4e4"/>
<rect x="855" y="453" width="21" height="14" fill="#9a9a9a"/>
<rect x="855" y="453" width="21" height="2" fill="url(#tex)"/>
<rect x="857" y="456" width="18" height="9" fill="#fff"/>
<text x="858" y="463.6" font-size="9" fill="#000" textLength="15.4" lengthAdjust="spacingAndGlyphs" stroke="#000" stroke-width="0.3">1.23</text>
<path d="M848.5 456.8 L853 461.3 L848.5 465.8z" fill="#fff" stroke="#000" shape-rendering="auto"/>
<rect x="857" y="471" width="16" height="7" fill="#e58a2c"/>
<rect x="858" y="472" width="14" height="6" fill="#fff"/>
<text x="865.0" y="477.3" font-size="6.8" fill="#e58a2c" textLength="12.4" lengthAdjust="spacingAndGlyphs" font-weight="bold" text-anchor="middle" stroke="#e58a2c" stroke-width="0.38">DBL</text>
<rect x="846" y="485" width="38" height="38" fill="#e6a05a"/>
<rect x="847" y="486" width="36" height="36" fill="#fff1d2"/>
<rect x="849" y="488" width="32" height="32" fill="#e8954a"/>
<rect x="850" y="489" width="30" height="30" fill="#dcdcdc"/>
<rect x="850" y="489" width="30" height="5" fill="#e4e4e4"/>
<text x="868.5" y="494.3" font-size="6.5" fill="#000" font-weight="bold" text-anchor="end" stroke="#000" stroke-width="0.22">100 -</text>
<text x="868.5" y="505.3" font-size="6.5" fill="#000" font-weight="bold" text-anchor="end" stroke="#000" stroke-width="0.22">50 -</text>
<text x="868.5" y="516.0" font-size="6.5" fill="#000" font-weight="bold" text-anchor="end" stroke="#000" stroke-width="0.22">0 -</text>
<rect x="870.5" y="490.5" width="4" height="26" rx="1.6" fill="#fff" stroke="#000" shape-rendering="auto"/>
<rect x="872" y="498" width="1" height="18" fill="#d02020"/>
<circle cx="873.2" cy="515.6" r="2.5" fill="#d01010" shape-rendering="auto"/>
<path d="M848.5 500.2 L853 504.7 L848.5 509.2z" fill="#fff" stroke="#000" shape-rendering="auto"/>
<rect x="857" y="514" width="16" height="7" fill="#e58a2c"/>
<rect x="858" y="515" width="14" height="6" fill="#fff"/>
<text x="865.0" y="520.3" font-size="6.8" fill="#e58a2c" textLength="12.4" lengthAdjust="spacingAndGlyphs" font-weight="bold" text-anchor="middle" stroke="#e58a2c" stroke-width="0.38">DBL</text>
<circle cx="850.3" cy="207.5" r="2.0" fill="#e01818" shape-rendering="auto"/>
<circle cx="850.3" cy="238.5" r="2.0" fill="#e01818" shape-rendering="auto"/>
<circle cx="848.3" cy="349.5" r="2.0" fill="#e01818" shape-rendering="auto"/>
<circle cx="848.3" cy="392.5" r="2.0" fill="#e01818" shape-rendering="auto"/>
<circle cx="847.3" cy="461.5" r="2.0" fill="#e01818" shape-rendering="auto"/>
<circle cx="847.3" cy="504.5" r="2.0" fill="#e01818" shape-rendering="auto"/>
<circle cx="177.3" cy="291.5" r="2.0" fill="#e01818" shape-rendering="auto"/>
<text x="64.6" y="630" font-size="12" fill="#101018" textLength="119.2" lengthAdjust="spacingAndGlyphs" stroke="#101018" stroke-width="0.22">Update interval (in ms)</text>
<rect x="63" y="634" width="38" height="38" fill="#0a0ac8"/>
<rect x="65" y="636" width="34" height="34" fill="#fff"/>
<rect x="66" y="637" width="32" height="32" fill="#0a0ac8"/>
<rect x="67" y="638" width="30" height="30" fill="#dcdcdc"/>
<rect x="67" y="638" width="30" height="5" fill="#e4e4e4"/>
<rect x="75" y="645" width="21" height="15" fill="#989898"/>
<rect x="75" y="645" width="21" height="15" fill="url(#tex)"/>
<rect x="75" y="646" width="21" height="1" fill="#c8c8c8"/>
<rect x="75" y="658" width="21" height="1" fill="#c0c0c0"/>
<rect x="68.6" y="643.2" width="7.4" height="18.4" rx="3.6" fill="url(#knob)" stroke="#8a8a8a" stroke-width="0.9" shape-rendering="auto"/>
<path d="M70.9 649.4 l1.4 -2.4 l1.4 2.4z M70.9 655.6 l1.4 2.4 l1.4 -2.4z" fill="#7c7c7c" shape-rendering="auto"/>
<path d="M69.6 652.4 h5.4" stroke="#a8a8a8" stroke-width="0.8" shape-rendering="auto"/>
<rect x="78" y="648" width="18" height="9" fill="#fff"/>
<text x="78.6" y="655.6" font-size="9" fill="#000" textLength="14.6" lengthAdjust="spacingAndGlyphs" stroke="#000" stroke-width="0.3">1.23</text>
<path d="M95.5 648.8 L100 653.3 L95.5 657.8z" fill="#fff" stroke="#000" shape-rendering="auto"/>
<rect x="74" y="663" width="16" height="7" fill="#0a0ac8"/>
<rect x="75" y="664" width="14" height="6" fill="#fff"/>
<text x="82.0" y="669.3" font-size="6.8" fill="#0a0ac8" textLength="12.4" lengthAdjust="spacingAndGlyphs" font-weight="bold" text-anchor="middle" stroke="#0a0ac8" stroke-width="0.38">U32</text>
<rect x="101" y="653" width="70" height="1" fill="#1c1c9c"/>
<rect x="171.5" y="637.5" width="31" height="31" fill="#ffffca" stroke="#000"/>
<g shape-rendering="auto">
<rect x="181" y="643" width="12" height="5" fill="#000"/><rect x="181" y="659" width="12" height="5" fill="#000"/>
<rect x="179.8" y="647.6" width="14.4" height="11.6" rx="2.4" fill="#ffffca" stroke="#000" stroke-width="1.6"/>
<rect x="195" y="651.6" width="1.4" height="2.6" fill="#000"/>
<path d="M186.6 650 V655.6 M187.2 653.6 L189.8 649.6" stroke="#000" stroke-width="1.1" fill="none"/>
<rect x="186.2" y="657" width="1" height="1" fill="#000"/>
<rect x="182.2" y="653" width="1" height="1" fill="#000"/>
<rect x="191.2" y="653" width="1" height="1" fill="#000"/>
</g>
<text x="304.3" y="635.6" font-size="12" fill="#101018" textLength="79.4" lengthAdjust="spacingAndGlyphs" stroke="#101018" stroke-width="0.22">Stop Condition</text>
<rect x="303" y="640" width="38" height="38" fill="#1c7c1c"/>
<rect x="305" y="642" width="34" height="34" fill="#fff"/>
<rect x="306" y="643" width="32" height="32" fill="#1c7c1c"/>
<rect x="307" y="644" width="30" height="30" fill="#dcdcdc"/>
<rect x="307" y="644" width="30" height="5" fill="#e4e4e4"/>
<rect x="308" y="652" width="28" height="15" fill="#9c9c9c"/>
<rect x="309" y="653" width="26" height="13" fill="#dadada"/>
<rect x="309" y="653" width="26" height="2" fill="#f0f0f0"/>
<text x="312.8" y="662.2" font-size="6.8" fill="#d01828" textLength="18" lengthAdjust="spacingAndGlyphs" font-weight="bold" stroke="#d01828" stroke-width="0.22">STOP</text>
<path d="M335.5 655.4 L340 659.5 L335.5 663.6z" fill="#fff" stroke="#000" shape-rendering="auto"/>
<rect x="315" y="669" width="15" height="7" fill="#1c7c1c"/>
<rect x="316" y="670" width="13" height="6" fill="#fff"/>
<text x="316.8" y="675.3" font-size="6.8" fill="#1c7c1c" textLength="11.4" lengthAdjust="spacingAndGlyphs" font-weight="bold" stroke="#1c7c1c" stroke-width="0.45">T F</text>
<path d="M341 659.5 H347" stroke="#1c7c1c" stroke-dasharray="1 1"/>
<rect x="347" y="652" width="16" height="16" fill="#1c7c1c"/>
<rect x="348" y="653" width="14" height="14" fill="#f4ffd8"/>
<path d="M352.7 654.2 h4.8 l3.4 3.4 v4.8 l-3.4 3.4 h-4.8 l-3.4 -3.4 v-4.8z" fill="#fff" stroke="#000" stroke-width="1" shape-rendering="auto"/>
<path d="M353.3 655.8 h3.6 l2.5 2.5 v3.6 l-2.5 2.5 h-3.6 l-2.5 -2.5 v-3.6z" fill="#f00000" shape-rendering="auto"/>
<rect x="751" y="656" width="16" height="16" fill="#0a0ac8"/>
<rect x="753" y="658" width="12" height="12" fill="#fff"/>
<rect x="758" y="663" width="2" height="5" fill="#0a0ac8"/>
<rect x="758" y="660" width="2" height="2" fill="#0a0ac8"/>
<text x="810.2" y="640.6" font-size="14.5" fill="#20201e" font-family="'Liberation Serif', 'DejaVu Serif', serif" font-style="italic" stroke="#20201e" stroke-width="0.22">T</text>
<text x="823.8" y="642.0" font-size="14.5" fill="#20201e" textLength="9.4" lengthAdjust="spacingAndGlyphs" font-family="'Liberation Serif', 'DejaVu Serif', serif" stroke="#20201e" stroke-width="0.22">=</text>
<rect x="837" y="635" width="62" height="1" fill="#20201e"/>
<text x="864.6" y="629.6" font-size="14" fill="#20201e" font-family="'Liberation Serif', 'DejaVu Serif', serif" font-style="italic" stroke="#20201e" stroke-width="0.22">B</text>
<text x="838.8" y="670.2" font-size="14" fill="#20201e" textLength="12" lengthAdjust="spacingAndGlyphs" font-family="'Liberation Serif', 'DejaVu Serif', serif" font-style="italic" stroke="#20201e" stroke-width="0.22">ln</text>
<path d="M860.4 639.6 q-6.2 9.8 -6.2 19.6 t6.2 19.6" fill="none" stroke="#20201e" stroke-width="1.3" shape-rendering="auto"/>
<path d="M892.8 639.6 q6.2 9.8 6.2 19.6 t-6.2 19.6" fill="none" stroke="#20201e" stroke-width="1.3" shape-rendering="auto"/>
<text x="862.8" y="661" font-size="14" fill="#20201e" textLength="16" lengthAdjust="spacingAndGlyphs" font-family="'Liberation Serif', 'DejaVu Serif', serif" font-style="italic" stroke="#20201e" stroke-width="0.22">Re</text>
<text x="881.4" y="645.2" font-size="9" fill="#20201e" font-family="'Liberation Serif', 'DejaVu Serif', serif" font-style="italic" stroke="#20201e" stroke-width="0.22">B</text>
<rect x="879" y="646" width="11" height="1" fill="#20201e"/>
<text x="880.4" y="655.4" font-size="9" fill="#20201e" font-family="'Liberation Serif', 'DejaVu Serif', serif" font-style="italic" stroke="#20201e" stroke-width="0.22">T</text>
<text x="885.6" y="657.6" font-size="6.5" fill="#20201e" font-family="'Liberation Serif', 'DejaVu Serif', serif" stroke="#20201e" stroke-width="0.22">0</text>
<rect x="861" y="664" width="29" height="1" fill="#20201e"/>
<text x="869.6" y="678.2" font-size="14" fill="#20201e" font-family="'Liberation Serif', 'DejaVu Serif', serif" font-style="italic" stroke="#20201e" stroke-width="0.22">R</text>
<text x="879.4" y="681.2" font-size="10" fill="#20201e" font-family="'Liberation Serif', 'DejaVu Serif', serif" stroke="#20201e" stroke-width="0.22">0</text>
</svg>
</body></html>
